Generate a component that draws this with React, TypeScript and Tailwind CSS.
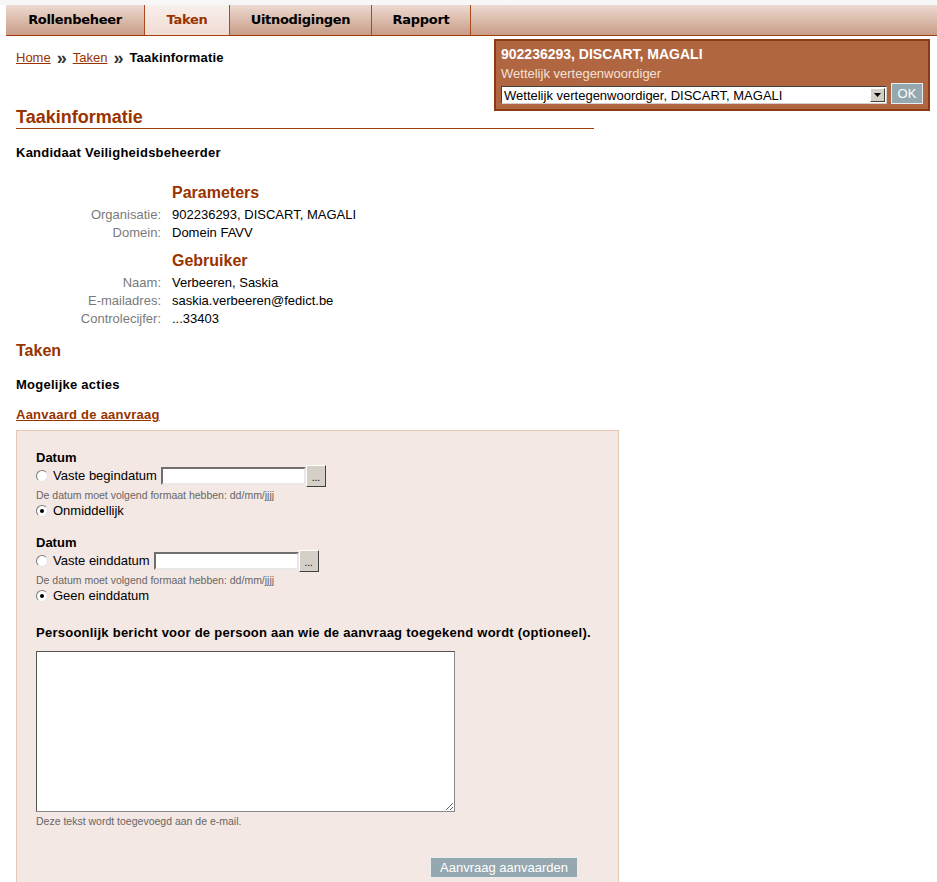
import React from "react";

// Tab navigation items
const tabs = [
  { label: "Rollenbeheer", width: "w-[139px]", active: false },
  { label: "Taken", width: "w-[85px]", active: true },
  { label: "Uitnodigingen", width: "w-[142px]", active: false },
  { label: "Rapport", width: "w-[99px]", active: false },
];

const parameters = [
  { label: "Organisatie:", value: "902236293, DISCART, MAGALI" },
  { label: "Domein:", value: "Domein FAVV" },
];

const gebruiker = [
  { label: "Naam:", value: "Verbeeren, Saskia" },
  { label: "E-mailadres:", value: "saskia.verbeeren@fedict.be" },
  { label: "Controlecijfer:", value: "...33403" },
];

const Radio = ({ checked = false }: { checked?: boolean }) => (
  <span className="inline-flex w-[12px] h-[12px] shrink-0 items-center justify-center rounded-full border border-t-[#7b7b7b] border-l-[#7b7b7b] border-r-[#e4e4e4] border-b-[#e4e4e4] bg-white">
    {checked && <span className="w-[4px] h-[4px] rounded-full bg-black" />}
  </span>
);

const InfoRows = ({ rows }: { rows: { label: string; value: string }[] }) => (
  <div className="flex flex-col">
    {rows.map((row) => (
      <div key={row.label} className="flex h-[18px] items-center">
        <span className="w-[145px] text-right text-[#7a7a7a]">{row.label}</span>
        <span className="ml-[11px] text-black">{row.value}</span>
      </div>
    ))}
  </div>
);

const DateRow = ({ label }: { label: string }) => (
  <div className="flex h-[22px] items-center">
    <Radio />
    <span className="ml-[5px]">{label}</span>
    <span className="ml-[4px] h-[18px] w-[145px] border-2 border-t-[#6f6f6f] border-l-[#6f6f6f] border-r-[#e8e8e8] border-b-[#e8e8e8] bg-white" />
    <span className="flex h-[22px] w-[20px] items-end justify-center border border-t-white border-l-white border-r-[#404040] border-b-[#404040] bg-[#d4d0c8] pb-[3px] text-[10px] leading-[10px]">
      ...
    </span>
  </div>
);

const Hint = ({ children }: { children: React.ReactNode }) => (
  <div className="text-[10.5px] leading-[12px] text-[#666]">{children}</div>
);

export default function App() {
  return (
    <div className="w-[937px] min-h-[882px] bg-white font-['Liberation_Sans',Arial,sans-serif] text-[13px] text-black">
      {/* top strip */}
      <div className="h-[5px] bg-[#f7f7f7]" />

      {/* tab bar */}
      <div className="ml-[6px] flex h-[31px] border-b border-[#a33c0c] bg-gradient-to-b from-[#eddad1] to-[#c89d87]">
        {tabs.map((tab) => (
          <div
            key={tab.label}
            className={`${tab.width} flex items-center justify-center border-r border-[#a9491e] font-['DejaVu_Sans',Verdana,sans-serif] text-[13px] font-bold tracking-[-0.3px] ${
              tab.active ? "bg-gradient-to-b from-[#f8efeb] to-[#efdcd3] text-[#993300]" : "text-black"
            }`}
          >
            {tab.label}
          </div>
        ))}
      </div>

      {/* breadcrumb + role box */}
      <div className="flex h-[71px] items-start">
        <div className="flex items-center pl-[16px] pt-[14px] leading-[16px]">
          <a className="text-[#993300] underline">Home</a>
          <span className="mx-[6px] text-[18px] font-bold leading-[16px] text-[#333]">»</span>
          <a className="text-[#993300] underline">Taken</a>
          <span className="mx-[6px] text-[18px] font-bold leading-[16px] text-[#333]">»</span>
          <span className="font-bold tracking-[0.2px]">Taakinformatie</span>
        </div>

        <div className="ml-auto mr-[7px] mt-[3px] flex h-[72px] w-[436px] shrink-0 flex-col border-2 border-[#8c3a16] bg-[#b06640] pl-[5px] pt-[4px]">
          <div className="text-[14px] font-bold leading-[18px] text-white">902236293, DISCART, MAGALI</div>
          <div className="mt-[3px] leading-[16px] text-[#f3e1d8]">Wettelijk vertegenwoordiger</div>
          <div className="mt-[1px] flex items-end">
            <div className="flex h-[18px] w-[386px] items-center border border-t-[#404040] border-l-[#404040] border-r-[#d4d0c8] border-b-[#d4d0c8] bg-white pl-[2px]">
              <span className="flex-1 leading-[15px]">Wettelijk vertegenwoordiger, DISCART, MAGALI</span>
              <span className="mr-[1px] flex h-[14px] w-[15px] items-center justify-center border border-t-white border-l-white border-r-[#404040] border-b-[#404040] bg-[#d4d0c8]">
                <svg width="7" height="4" viewBox="0 0 7 4">
                  <path d="M0 0h7L3.5 4z" fill="#000" />
                </svg>
              </span>
            </div>
            <button className="ml-[4px] h-[21px] w-[32px] border border-[#e6eef0] bg-[#95a8b0] text-[13px] leading-[19px] text-white">
              OK
            </button>
          </div>
        </div>
      </div>

      {/* main content */}
      <div className="pl-[16px]">
        <h1 className="w-[578px] border-b border-[#a33c0c] text-[18px] font-bold leading-[21px] text-[#993300]">
          Taakinformatie
        </h1>
        <div className="mt-[16px] font-bold leading-[16px] tracking-[0.25px]">Kandidaat Veiligheidsbeheerder</div>

        <h2 className="ml-[156px] mt-[22px] text-[16px] font-bold leading-[19px] text-[#993300]">Parameters</h2>
        <div className="mt-[4px]">
          <InfoRows rows={parameters} />
        </div>

        <h2 className="ml-[156px] mt-[9px] text-[16px] font-bold leading-[19px] text-[#993300]">Gebruiker</h2>
        <div className="mt-[4px]">
          <InfoRows rows={gebruiker} />
        </div>

        <h2 className="mt-[13px] text-[16px] font-bold leading-[19px] text-[#993300]">Taken</h2>
        <div className="mt-[17px] font-bold leading-[16px] tracking-[0.25px]">Mogelijke acties</div>
        <a className="mt-[14px] block font-bold leading-[16px] tracking-[0.25px] text-[#993300] underline">
          Aanvaard de aanvraag
        </a>

        {/* accept form */}
        <div className="mt-[7px] w-[603px] border border-[#e8c6b6] bg-[#f4e8e4] pb-[20px] pl-[19px] pr-[40px] pt-[19px]">
          <div className="font-bold leading-[15px]">Datum</div>
          <DateRow label="Vaste begindatum" />
          <div className="mt-[2px]">
            <Hint>De datum moet volgend formaat hebben: dd/mm/jjjj</Hint>
          </div>
          <div className="mt-[2px] flex h-[16px] items-center">
            <Radio checked />
            <span className="ml-[5px]">Onmiddellijk</span>
          </div>

          <div className="mt-[16px] font-bold leading-[15px]">Datum</div>
          <DateRow label="Vaste einddatum" />
          <div className="mt-[2px]">
            <Hint>De datum moet volgend formaat hebben: dd/mm/jjjj</Hint>
          </div>
          <div className="mt-[2px] flex h-[16px] items-center">
            <Radio checked />
            <span className="ml-[5px]">Geen einddatum</span>
          </div>

          <div className="mt-[21px] whitespace-nowrap font-bold leading-[16px] tracking-[0.25px]">
            Persoonlijk bericht voor de persoon aan wie de aanvraag toegekend wordt (optioneel).
          </div>
          <textarea className="mt-[10px] block h-[161px] w-[419px] resize border border-t-[#555] border-l-[#555] border-r-[#888] border-b-[#888] bg-white outline-none" />
          <div className="mt-[3px]">
            <Hint>Deze tekst wordt toegevoegd aan de e-mail.</Hint>
          </div>

          <div className="mt-[30px] flex justify-end">
            <button className="h-[21px] w-[148px] border border-[#e6eef0] bg-[#95a8b0] text-[13px] leading-[19px] text-white">
              Aanvraag aanvaarden
            </button>
          </div>
        </div>
      </div>
    </div>
  );
}
